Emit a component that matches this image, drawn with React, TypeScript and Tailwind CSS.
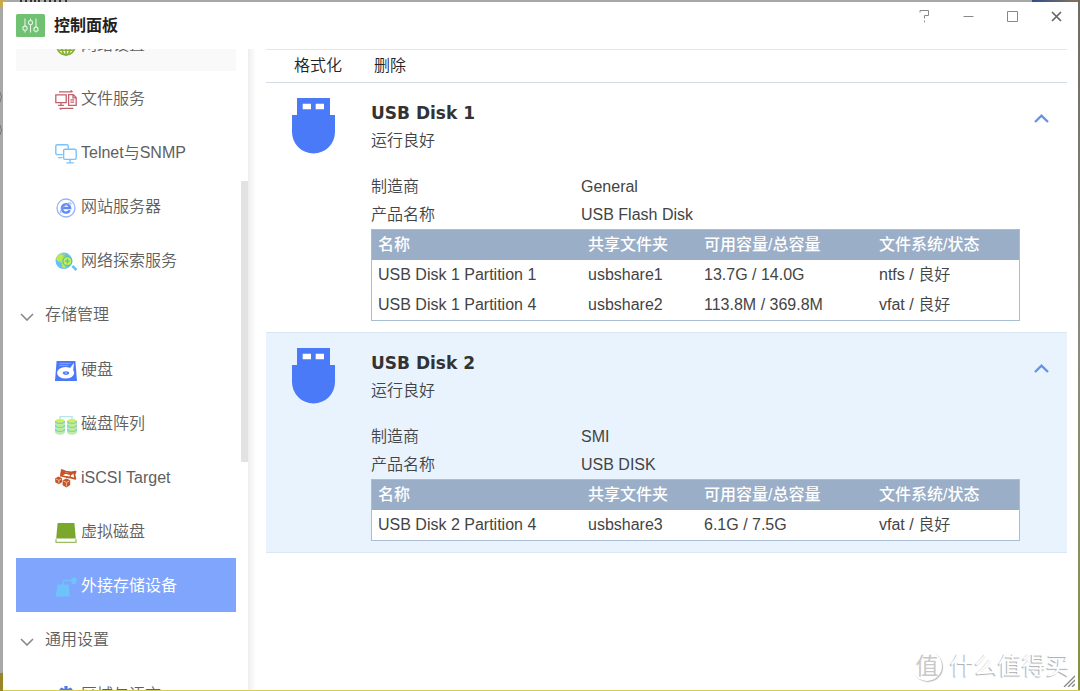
import { useState, type ReactNode } from "react";

type Partition = {
  name: string;
  share: string;
  capacity: string;
  status: string;
};

type Disk = {
  name: string;
  health: string;
  vendor: string;
  product: string;
  partitions: Partition[];
};

const disks: Disk[] = [
  {
    name: "USB Disk 1",
    health: "运行良好",
    vendor: "General",
    product: "USB Flash Disk",
    partitions: [
      { name: "USB Disk 1 Partition 1", share: "usbshare1", capacity: "13.7G / 14.0G", status: "ntfs / 良好" },
      { name: "USB Disk 1 Partition 4", share: "usbshare2", capacity: "113.8M / 369.8M", status: "vfat / 良好" },
    ],
  },
  {
    name: "USB Disk 2",
    health: "运行良好",
    vendor: "SMI",
    product: "USB DISK",
    partitions: [
      { name: "USB Disk 2 Partition 4", share: "usbshare3", capacity: "6.1G / 7.5G", status: "vfat / 良好" },
    ],
  },
];

/* ---------- Icons ---------- */

function Icon({ children }: { children: ReactNode }) {
  return (
    <svg viewBox="0 0 22 20" className="mt-0.5 h-5 w-[22px] shrink-0" fill="none" aria-hidden="true">
      {children}
    </svg>
  );
}

const NetworkIcon = () => (
  <Icon>
    <g stroke="#86b033" strokeWidth="1.6">
      <circle cx="11" cy="10" r="9" />
      <ellipse cx="11" cy="10" rx="4.4" ry="9" />
      <path d="M11 1v18M2 10h18M3.5 5.2h15M3.5 14.2h15" />
    </g>
  </Icon>
);

const FileServiceIcon = () => (
  <Icon>
    <g stroke="#c4606c" strokeWidth="1.3">
      <path d="M4 1.8h13.5M15.6.5l2 1.3M4.6 18.3h13.8M4.6 18.3l1.8 1.2" />
      <path d="M.8 4.8h10.4v7.8H.8zM6 12.6v2.6M3 15.3h6" />
      <path d="M13.6 4.6h4.6l3 3v7.8h-7.6zM18 4.8v3h3M15.4 9.8h3.8M15.4 12.2h3.8" />
    </g>
  </Icon>
);

const TelnetIcon = () => (
  <Icon>
    <g stroke="#79c2fb" strokeWidth="1.4" strokeLinecap="round">
      <path d="M7 10.6H2.2A1.4 1.4 0 0 1 .8 9.2v-7A1.4 1.4 0 0 1 2.2.8h9.6a1.4 1.4 0 0 1 1.4 1.4v2M3.6 13.6H7" />
      <rect x="8.6" y="5.2" width="12.6" height="10.2" rx="1.4" />
      <path d="M15 15.6v3M11.8 18.9h6.4" />
    </g>
  </Icon>
);

const WebServerIcon = () => (
  <Icon>
    <circle cx="11" cy="10" r="9" stroke="#96b0fb" strokeWidth="1.3" />
    <path d="M14.8 12.2A4.2 4.2 0 1 1 15.2 10H7.4" stroke="#5f8bf9" strokeWidth="2.4" />
    <path d="M6.4 14.8c-2.6.6.4-5 4-7.6s6.2-3.2 5.8-.8" stroke="#86a5fb" />
  </Icon>
);

const DiscoveryIcon = () => (
  <Icon>
    <circle cx="8.8" cy="8.8" r="8.3" fill="#69bff7" />
    <path d="M1 6.6C2 4 4 1.8 6.8 1l3.6 1-2.6 2.4 4 .2 3 2-2 6-3.6 4-2-1.4-.6-4.8L2.4 9z" fill="#b9e94a" />
    <path d="M7.6 1l2 1.6-2.4.8z" fill="#69bff7" />
    <circle cx="12.4" cy="9.2" r="4.5" fill="#c4ec58" stroke="#4ec3b2" strokeWidth="1.3" />
    <path d="M12.4 7v4.4M10.2 9.2h4.4" stroke="#4ec3b2" strokeWidth="1.2" />
    <path d="M17.4 13.8l4 4.2" stroke="#69bff7" strokeWidth="2.6" />
  </Icon>
);

const HardDriveIcon = () => (
  <Icon>
    <path d="M1.6 0h18.8L22 20H0z" fill="#4b79f7" />
    <path d="M4.6 2.4h11M4 4.4h9" stroke="#8aa8fb" strokeWidth=".9" />
    <path d="M19 2l-4.4 5.4 3.4 3z" fill="#fff" />
    <ellipse cx="10.6" cy="11.8" rx="8.6" ry="5.8" fill="#fff" />
    <ellipse cx="11" cy="12" rx="3.2" ry="1.8" fill="#4b79f7" />
    <ellipse cx="11" cy="12" rx="1.2" ry=".7" fill="#b4c8fd" />
  </Icon>
);

const RaidIcon = () => (
  <Icon>
    <path d="M5 5V1.6h12V5" stroke="#b4e6ea" strokeWidth="1.4" />
    {[0, 12].map((x) => (
      <g key={x} transform={`translate(${x} 0)`}>
        <path d="M0 6v11c0 1.600 2.200 2.800 5 2.800s5-1.200 5-2.800V6z" fill="#b9ecae" />
        <ellipse cx="5" cy="6" rx="4.6" ry="2" fill="#d2ef52" />
        <g stroke="#79cfc8" strokeWidth="1.2">
          <path d="M.4 6c0 1.400 2 2.400 4.600 2.400S9.600 7.400 9.600 6" />
          <path d="M.4 10c0 1.400 2 2.400 4.600 2.400s4.600-1 4.600-2.400" />
          <path d="M.4 14c0 1.400 2 2.400 4.600 2.400s4.600-1 4.600-2.400" />
        </g>
        <path d="M2 10.600c2 .7 4 .7 6 0M2 14.600c2 .7 4 .7 6 0" stroke="#d2ef52" />
      </g>
    ))}
  </Icon>
);

const IscsiIcon = () => (
  <Icon>
    <path
      d="M6.8 1.2l4 1.400 5.400.8 4.400-.8-1.200 3 1 4.200-4.600-1.200-4.400-.6L6 6.600z"
      stroke="#c45527"
      strokeWidth="1.8"
      strokeLinejoin="round"
    />
    <path d="M6.8 1.2l3.6 3L6 6.6zM10.4 4.2l5.4 1.4 4.6-2.6M15.8 5.6l-1 3" fill="#c45527" stroke="#c45527" strokeWidth="1.2" />
    <path d="M3.6 7.4L7 9.2v4l-3.200 2L.2 13.200v-4z" fill="#c45527" />
    <path d="M11.4 9.4l3.800 1.800V16l-3.800 2.600-3.800-2.400v-5z" fill="#c45527" />
    <path d="M1 10l2.800 1.400L6.400 10M3.800 11.400v2.800M8.400 12l3 1.400 3-1.400M11.400 13.400v4" stroke="#f0cdbd" strokeWidth=".8" />
  </Icon>
);

const VirtualDiskIcon = () => (
  <Icon>
    <path d="M2.6 0h16.8l1.4 15.6H1.2z" fill="#7ba72d" />
    <path d="M1 16v3.3h20V16" stroke="#9dbd62" strokeWidth="1.2" />
  </Icon>
);

const ExternalIcon = () => (
  <Icon>
    <path d="M2.4 7.6h11.4l1 12H.8z" fill="#6fc3fb" />
    <path d="M8.2 8V5.4c0-1.4.8-2 2-2H17" stroke="#6fc3fb" strokeWidth="1.4" />
    <ellipse cx="19" cy="3.8" rx="2.8" ry="3.6" fill="#6fc3fb" />
  </Icon>
);

const RegionIcon = () => (
  <Icon>
    <path d="M9.4 0h3.200v3l3-1.400 2 1.800-1 2.600H20v4H2V6h3.400l-1-2.600 2-1.800 3 1.400z" fill="#4b79f7" />
  </Icon>
);

const UsbIcon = () => (
  <svg viewBox="0 0 43 56" className="h-14 w-[43px] shrink-0" aria-hidden="true">
    <path d="M5 0h33v17h5v17a21.500 21.500 0 0 1-43 0V17h5z" fill="#4a7af8" />
    <path d="M10.700 5.700H19v5.600h-8.300zM23.700 5.700H32v5.600h-8.300z" fill="#fff" />
  </svg>
);

/* ---------- Sidebar ---------- */

const groups = [
  {
    title: null,
    items: [
      { name: "网络设置", icon: NetworkIcon, hover: true },
      { name: "文件服务", icon: FileServiceIcon },
      { name: "Telnet与SNMP", icon: TelnetIcon },
      { name: "网站服务器", icon: WebServerIcon },
      { name: "网络探索服务", icon: DiscoveryIcon },
    ],
  },
  {
    title: "存储管理",
    items: [
      { name: "硬盘", icon: HardDriveIcon },
      { name: "磁盘阵列", icon: RaidIcon },
      { name: "iSCSI Target", icon: IscsiIcon },
      { name: "虚拟磁盘", icon: VirtualDiskIcon },
      { name: "外接存储设备", icon: ExternalIcon },
    ],
  },
  {
    title: "通用设置",
    items: [{ name: "区域与语言", icon: RegionIcon }],
  },
];

function Sidebar() {
  const [active, setActive] = useState("外接存储设备");

  return (
    <aside className="flex shrink-0 overflow-hidden pl-[13px]">
      <nav className="-mt-8 w-[220px] text-[#606060]">
        {groups.map((group, i) => (
          <div key={i} className="mb-px">
            {group.title && (
              <button className="flex h-[54px] w-full items-center gap-[11px] pl-1 text-left">
                <svg viewBox="0 0 14 8" className="mt-1 h-2 w-3.5" fill="none" stroke="#888" strokeWidth="1.6">
                  <path d="M1 1l6 6 6-6" />
                </svg>
                {group.title}
              </button>
            )}
            {group.items.map((item) => (
              <button
                key={item.name}
                onClick={() => setActive(item.name)}
                className={`flex h-[54px] w-full items-center gap-1 pt-0.5 pl-[39px] text-left ${
                  active === item.name
                    ? "bg-[#7fa5fd] font-normal text-white"
                    : "hover" in item
                      ? "bg-[#f9f9f9]"
                      : ""
                }`}
              >
                <item.icon />
                {item.name}
              </button>
            ))}
          </div>
        ))}
      </nav>
      {/* Scroll thumb */}
      <div className="ml-[5px] w-[7px] pt-[132px]">
        <div className="h-[281px] bg-[#e2e2e2]" />
      </div>
    </aside>
  );
}

/* ---------- Disks ---------- */

function DiskCard({ disk, selected, onSelect }: { disk: Disk; selected: boolean; onSelect: () => void }) {
  const [open, setOpen] = useState(true);

  return (
    <section
      onClick={onSelect}
      className={`flex items-start pt-[15px] pr-[18px] pb-[11px] pl-[26px] ${
        selected ? "border-y border-[#dbe6f2] bg-[#e8f3fe]" : ""
      }`}
    >
      <UsbIcon />
      <div className="mt-px ml-9 min-w-0 flex-1 leading-7">
        <h2 className="font-['DejaVu_Sans',sans-serif] text-[17px] leading-7 font-bold text-[#333]">{disk.name}</h2>
        <p>{disk.health}</p>
        {open && (
          <>
            <dl className="mt-[18px] grid grid-cols-[210px_1fr]">
              <dt>制造商</dt>
              <dd>{disk.vendor}</dd>
              <dt>产品名称</dt>
              <dd>{disk.product}</dd>
            </dl>
            <div className="border border-[#a9bdd4] bg-white">
              <table className="w-full table-fixed text-left">
                <thead>
                  <tr className="h-[30px] bg-[#9aaec8] text-white">
                    <th className="w-[210px] pl-1.5 font-medium">名称</th>
                    <th className="w-[116px] pl-1.5 font-medium">共享文件夹</th>
                    <th className="w-[175px] pl-1.5 font-medium">可用容量/总容量</th>
                    <th className="pl-1.5 font-medium">文件系统/状态</th>
                  </tr>
                </thead>
                <tbody>
                  {disk.partitions.map((p) => (
                    <tr key={p.name} className="h-[30px]">
                      <td className="pl-1.5">{p.name}</td>
                      <td className="pl-1.5">{p.share}</td>
                      <td className="pl-1.5">{p.capacity}</td>
                      <td className="pl-1.5">{p.status}</td>
                    </tr>
                  ))}
                </tbody>
              </table>
            </div>
          </>
        )}
      </div>
      <button aria-label="展开/收起" onClick={() => setOpen(!open)} className="mt-4 ml-3.5">
        <svg viewBox="0 0 15 9" className={`h-[9px] w-[15px] ${open ? "" : "rotate-180"}`} fill="none">
          <path d="M1 8l6.5-6.3L14 8" stroke="#6593ec" strokeWidth="2.4" />
        </svg>
      </button>
    </section>
  );
}

/* ---------- Window ---------- */

function TitleBar() {
  return (
    <header className="flex h-[47px] shrink-0 items-center pl-[13px]">
      <svg viewBox="0 0 29 23" className="h-[23px] w-[29px]" fill="none" aria-hidden="true">
        <rect width="29" height="23" rx="1.5" fill="#70c171" />
        <g stroke="#e4f5e4" strokeWidth="1.1">
          <path d="M9 4.500v7.500M9 16.500v2M14.500 4.500v2M14.500 11v7.500M20 4.500v8.500M20 17.500v1" />
          <circle cx="9" cy="14.2" r="2.1" />
          <circle cx="14.5" cy="8.6" r="2.1" />
          <circle cx="20" cy="15.2" r="2.1" />
        </g>
      </svg>
      <h1 className="ml-[9px] flex-1 font-bold text-[#222]">控制面板</h1>
      <div className="flex self-start text-[#888]">
        {[
          { label: "帮助", path: "M2 2.5v-2h8.5v5h-4v3M6.5 10.5v1.8" },
          { label: "最小化", path: "M1.5 6.5h10" },
          { label: "最大化", path: "M1.5 1.5h10v10h-10z" },
        ].map((c) => (
          <button key={c.label} aria-label={c.label} className="flex h-7 w-11 items-center justify-center">
            <svg viewBox="0 0 13 13" className="h-[13px] w-[13px]" fill="none" stroke="currentColor">
              <path d={c.path} />
            </svg>
          </button>
        ))}
        <button aria-label="关闭" className="flex h-7 w-11 items-center justify-center text-[#666]">
          <svg viewBox="0 0 13 13" className="h-[13px] w-[13px]" fill="none" stroke="currentColor" strokeWidth="1.7">
            <path d="M2 2l9 9M11 2l-9 9" />
          </svg>
        </button>
      </div>
    </header>
  );
}

// Slivers of the desktop that stay visible around the window
function Desktop() {
  return (
    <div className="pointer-events-none absolute inset-0" aria-hidden="true">
      <div className="absolute top-0 left-0 h-2 w-[5px] bg-[#c9a94e]" />
      <svg className="absolute top-0 left-5 h-0.5 w-12" viewBox="0 0 48 2">
        <path d="M1 0v2M6 0v2M11 0v2M15 0v2M19 0v2M25 0v2M30 0v2M35 0v2M40 0v2M46 0v2" stroke="#333" strokeWidth="2" />
      </svg>
      <svg className="absolute top-[90px] left-0 h-12 w-[3px]" viewBox="0 0 3 48" fill="none" stroke="#777">
        <path d="M0 2q3 5 0 10M0 35q3 5 0 10" />
      </svg>
      <div className="absolute top-0 right-0 h-0.5 w-12 bg-linear-to-r from-[#2f4c8c] to-[#8a7350]" />
      <div className="absolute top-0 right-0 bottom-0 w-0.5 bg-linear-to-b from-[#6f6a62] via-[#8b8a80] to-[#86923e]" />
      <div className="absolute right-0 bottom-0 left-0 h-px bg-[#d8cd4c]" />
      <div className="absolute bottom-0 left-0 h-[18px] w-[3px] bg-[#9a8526]" />
    </div>
  );
}

function Watermark() {
  return (
    <div className="pointer-events-none absolute right-2 bottom-2 flex items-center gap-2 text-[24px] leading-8 font-normal text-white [text-shadow:-1px_1px_1px_#aaa]">
      <span className="flex h-[30px] w-[30px] items-center justify-center rounded-full text-[23px] text-[#c8c8c8] shadow-[1px_1px_1px_#bbb] [text-shadow:none]">
        值
      </span>
      什么值得买
    </div>
  );
}

export default function App() {
  const [selected, setSelected] = useState("USB Disk 2");

  return (
    <div className="relative h-screen overflow-hidden bg-[#a8a8a8] pt-0.5 pr-0.5 pb-px pl-[3px] font-['Liberation_Sans','Noto_Sans_CJK_SC',sans-serif] text-[16px] leading-6 font-[350] text-[#444]">
      <Desktop />
      <div className="relative flex h-full flex-col bg-white">
        <TitleBar />
        <div className="flex min-h-0 flex-1">
          <Sidebar />
          <div className="w-2 shrink-0 bg-linear-to-r from-[#eeeeee] to-white" />
          <main className="min-w-0 flex-1 pr-[11px] pl-2.5">
            <div className="flex h-[34px] items-center gap-8 border-t border-b border-t-[#e6e6e6] border-b-[#d3dde8] pl-7 text-[#222]">
              <button>格式化</button>
              <button>删除</button>
            </div>
            {disks.map((disk) => (
              <DiskCard
                key={disk.name}
                disk={disk}
                selected={selected === disk.name}
                onSelect={() => setSelected(disk.name)}
              />
            ))}
          </main>
        </div>
        <Watermark />
        {/* Resize grip */}
        <svg viewBox="0 0 12 12" className="absolute right-[3px] bottom-[3px] h-3 w-3" stroke="#888" strokeWidth="1.4">
          <path d="M1 12L12 1M5 12l7-7M9 12l3-3" />
        </svg>
      </div>
    </div>
  );
}
